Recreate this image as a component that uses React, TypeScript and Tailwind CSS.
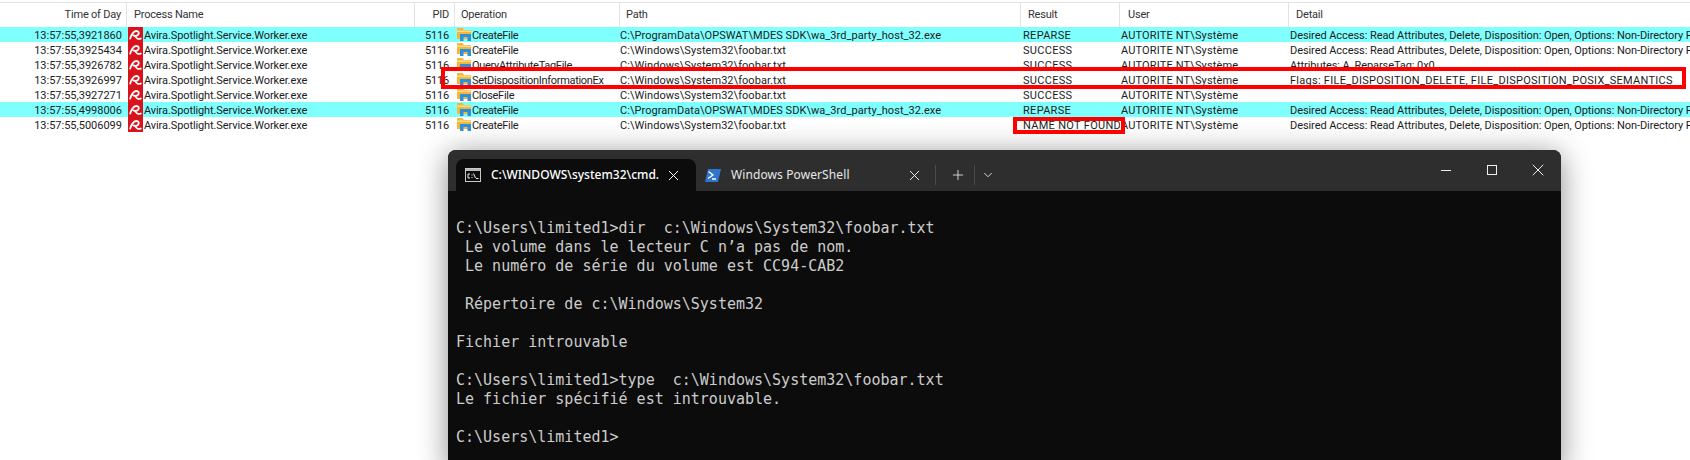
import { ChevronDown, Plus, X } from 'lucide-react';

const cols = 'grid grid-cols-[127px_288px_40px_165px_401px_99px_169px_401px]';

const rows = [
  { time: '13:57:55,3921860', op: 'CreateFile', path: 'C:\\ProgramData\\OPSWAT\\MDES SDK\\wa_3rd_party_host_32.exe', result: 'REPARSE', detail: 'Desired Access: Read Attributes, Delete, Disposition: Open, Options: Non-Directory File, Open Reparse Point', hit: true },
  { time: '13:57:55,3925434', op: 'CreateFile', path: 'C:\\Windows\\System32\\foobar.txt', result: 'SUCCESS', detail: 'Desired Access: Read Attributes, Delete, Disposition: Open, Options: Non-Directory File, Open Reparse Point' },
  { time: '13:57:55,3926782', op: 'QueryAttributeTagFile', path: 'C:\\Windows\\System32\\foobar.txt', result: 'SUCCESS', detail: 'Attributes: A, ReparseTag: 0x0' },
  { time: '13:57:55,3926997', op: 'SetDispositionInformationEx', path: 'C:\\Windows\\System32\\foobar.txt', result: 'SUCCESS', detail: 'Flags: FILE_DISPOSITION_DELETE, FILE_DISPOSITION_POSIX_SEMANTICS', caps: true },
  { time: '13:57:55,3927271', op: 'CloseFile', path: 'C:\\Windows\\System32\\foobar.txt', result: 'SUCCESS', detail: '' },
  { time: '13:57:55,4998006', op: 'CreateFile', path: 'C:\\ProgramData\\OPSWAT\\MDES SDK\\wa_3rd_party_host_32.exe', result: 'REPARSE', detail: 'Desired Access: Read Attributes, Delete, Disposition: Open, Options: Non-Directory File, Open Reparse Point', hit: true },
  { time: '13:57:55,5006099', op: 'CreateFile', path: 'C:\\Windows\\System32\\foobar.txt', result: 'NAME NOT FOUND', detail: 'Desired Access: Read Attributes, Delete, Disposition: Open, Options: Non-Directory File, Open Reparse Point' },
];

const terminal = [
  'C:\\Users\\limited1>dir  c:\\Windows\\System32\\foobar.txt',
  ' Le volume dans le lecteur C n’a pas de nom.',
  ' Le numéro de série du volume est CC94-CAB2',
  '',
  ' Répertoire de c:\\Windows\\System32',
  '',
  'Fichier introuvable',
  '',
  'C:\\Users\\limited1>type  c:\\Windows\\System32\\foobar.txt',
  'Le fichier spécifié est introuvable.',
  '',
  'C:\\Users\\limited1>',
];

function AviraIcon() {
  return (
    <div className="flex h-[15px] w-[15px] shrink-0 items-center justify-center bg-[#d8131b]">
      <svg width="13" height="12" viewBox="0 0 13 12" fill="none" stroke="#fff" strokeLinecap="round" strokeWidth="1.8">
        <path d="M1.2 9.6 C2 6 4.5 2 7.2 2 C9.8 2 10.4 4 9.2 5.6 C8 7 6 7.1 4.4 6.4" />
        <path d="M6.5 7.6 C7.8 9.8 10 10.6 11.8 9.4" />
      </svg>
    </div>
  );
}

function FolderIcon() {
  return (
    <svg width="15" height="14" viewBox="0 0 15 14" className="shrink-0">
      <path d="M0 1h5.5l1.5 2h7v9H0z" fill="#f3b73b" />
      <path d="M0 3.5h14V5H0z" fill="#fbdc82" />
      <path d="M3 7h11v7h-3.5v-4h-4v4H3z" fill="#2f8fd8" />
    </svg>
  );
}

function CmdIcon() {
  return (
    <svg width="16" height="14" viewBox="0 0 16 14" className="shrink-0">
      <rect x="0.5" y="0.5" width="15" height="13" fill="#0c0c0c" stroke="#c8c8c8" />
      <rect x="1" y="1" width="14" height="2" fill="#b8b8b8" />
      <path d="M5 6H3V10H5M7 6.5V7.5M7 9V10M8.5 5.5L10.5 10M11 10.5H13.5" stroke="#f0f0f0" fill="none" />
    </svg>
  );
}

function PowerShellIcon() {
  return (
    <svg width="16" height="13" viewBox="0 0 16 13" className="shrink-0">
      <path d="M3 0H16L13 13H0z" fill="#2f74d0" />
      <path d="M3.5 2.5L8 6L3 9.5" stroke="#fff" strokeWidth="1.4" fill="none" />
      <path d="M7 10H11" stroke="#fff" strokeWidth="1.4" />
    </svg>
  );
}

export default function App() {
  return (
    <div className="relative h-[460px] w-[1690px] overflow-hidden bg-white">
      <div className="pt-[2px] font-['Roboto',sans-serif] text-[11px] leading-[15px] text-[#1c1c1c]">
        <div className={`${cols} h-[25px] border-t border-[#e3e3e3] tracking-[-0.2px] text-[#333]`}>
          <div className="border-r border-[#e3e3e3] pr-[5px] pt-[4px] text-right">Time of Day</div>
          <div className="border-r border-[#e3e3e3] pl-[7px] pt-[4px]">Process Name</div>
          <div className="border-r border-[#e3e3e3] pr-[5px] pt-[4px] text-right">PID</div>
          <div className="border-r border-[#e3e3e3] pl-[6px] pt-[4px]">Operation</div>
          <div className="border-r border-[#e3e3e3] pl-[6px] pt-[4px]">Path</div>
          <div className="border-r border-[#e3e3e3] pl-[7px] pt-[4px]">Result</div>
          <div className="border-r border-[#e3e3e3] pl-[8px] pt-[4px]">User</div>
          <div className="pl-[7px] pt-[4px]">Detail</div>
        </div>
        {rows.map(r => (
          <div key={r.time} className={`${cols} h-[15px] whitespace-nowrap leading-[17px] ${r.hit ? 'bg-[#80ffff]' : ''}`}>
            <div className="pr-[5px] text-right">{r.time}</div>
            <div className="flex items-start pl-px">
              <AviraIcon />
              <span className="pl-px tracking-[-0.1px]">Avira.Spotlight.Service.Worker.exe</span>
            </div>
            <div className="pr-[6px] text-right tracking-[-0.2px]">5116</div>
            <div className="flex items-start pl-[2px] tracking-[-0.3px]">
              <FolderIcon />
              <span>{r.op}</span>
            </div>
            <div className="overflow-hidden tracking-[0.05px]">{r.path}</div>
            <div className="overflow-hidden pl-[2px] tracking-[0.3px]">{r.result}</div>
            <div className="overflow-hidden pl-px tracking-[0.15px]">AUTORITE NT\Système</div>
            <div className={`overflow-hidden pl-px ${r.caps ? 'tracking-[0.27px]' : 'tracking-[-0.07px]'}`}>{r.detail}</div>
          </div>
        ))}
      </div>

      {/* terminal window */}
      <div className="ml-[448px] mt-[18px] h-[320px] w-[1113px] overflow-hidden rounded-t-lg bg-[#0c0c0c] shadow-[0_4px_30px_rgba(0,0,0,0.45)]">
        <div className="flex h-[41px] items-end bg-[#2e2e2e] pl-2 font-['Noto_Sans',sans-serif] text-[#e8e8e8]">
          <div className="flex h-[32px] w-[240px] shrink-0 items-center rounded-t-lg bg-[#0c0c0c] pl-[9px] text-[12px] font-medium text-white">
            <CmdIcon />
            <span className="ml-[10px] w-[170px] overflow-hidden whitespace-nowrap">C:\WINDOWS\system32\cmd.</span>
            <X size={17} strokeWidth={1.4} className="ml-[4px]" />
          </div>
          <div className="flex h-[32px] w-[239px] shrink-0 items-center pl-[9px] text-[12px] tracking-[0.1px]">
            <PowerShellIcon />
            <span className="ml-[10px]">Windows PowerShell</span>
            <X size={17} strokeWidth={1.4} className="ml-auto mr-[12px]" />
          </div>
          <div className="flex h-[32px] items-center">
            <div className="h-[20px] border-l border-[#4a4a4a]" />
            <Plus size={16} strokeWidth={1.3} className="ml-[14px] mr-[8px]" />
            <div className="h-[20px] border-l border-[#4a4a4a]" />
            <ChevronDown size={14} strokeWidth={1.5} className="ml-[6px]" />
          </div>
          <div className="ml-auto flex h-[41px] items-center pr-[13px] pb-[1px]">
            <div className="h-px w-[10px] bg-[#eee]" />
            <div className="ml-[36px] h-[10px] w-[10px] border border-[#eee]" />
            <X size={20} strokeWidth={1.2} className="ml-[31px] text-[#eee]" />
          </div>
        </div>
        <div className="pl-2 pt-[28px] font-['DejaVu_Sans_Mono',monospace] text-[15px] leading-[19px] text-[#cccccc]">
          {terminal.map((line, i) => (
            <div key={i} className="h-[19px] whitespace-pre">{line}</div>
          ))}
        </div>
      </div>

      {/* red annotation boxes */}
      <div className="absolute left-[441px] top-[67px] h-[22px] w-[1245px] border-4 border-[#fe0000]" />
      <div className="absolute left-[1013px] top-[117px] h-[17px] w-[112px] border-4 border-[#fe0000]" />
    </div>
  );
}
